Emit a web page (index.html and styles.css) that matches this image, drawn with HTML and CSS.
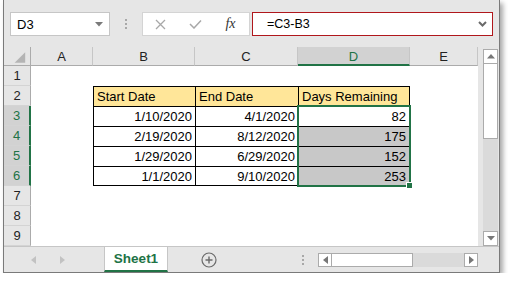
FILE: index.html
```html
<!DOCTYPE html>
<html lang="en">
<head>
    <meta charset="UTF-8">
    <title>Days Remaining</title>
    <link rel="stylesheet" href="styles.css">
</head>
<body>
    <div class="window">
      <!-- Name box + formula bar -->
      <div class="toolbar">
          <div class="namebox">
              <span>D3</span>
              <svg width="8" height="5" viewBox="0 0 8 5"><path d="M0 0h8L4 4.5z" fill="#7a7a7a"/></svg>
          </div>
          <div class="grip"></div>
          <div class="fxbtns">
              <span class="slot"><svg width="11" height="11" viewBox="0 0 11 11"><path d="M1 1l9 9M10 1l-9 9" stroke="#a8a8a8" stroke-width="1.3"/></svg></span>
              <span class="slot"><svg width="13" height="10" viewBox="0 0 13 10"><path d="M1 5l4 4L12 1.5" stroke="#a8a8a8" stroke-width="1.5" fill="none"/></svg></span>
              <span class="slot fx">fx</span>
          </div>
          <div class="formula">
              <span>=C3-B3</span>
              <svg width="9" height="6" viewBox="0 0 9 6"><path d="M1 1l3.5 3.5L8 1" stroke="#6a6a6a" stroke-width="2" fill="none"/></svg>
          </div>
      </div>

      <div class="main">
          <div class="sheet">
              <!-- header row -->
              <div class="corner"><svg width="27" height="19" viewBox="0 0 27 19"><path d="M11 16L22 5v11z" fill="#b4b4b4"/></svg></div>
              <div class="hd">A</div>
              <div class="hd">B</div>
              <div class="hd">C</div>
              <div class="hd on">D</div>
              <div class="hd">E</div>

              <div class="rh">1</div>
              <div class="c"></div><div class="c"></div><div class="c"></div><div class="c"></div><div class="c"></div>

              <div class="rh">2</div>
              <div class="c"></div>
              <div class="c t th">Start Date</div>
              <div class="c t th">End Date</div>
              <div class="c t th r">Days Remaining</div>
              <div class="c"></div>

              <div class="rh on">3</div>
              <div class="c"></div>
              <div class="c t num">1/10/2020</div>
              <div class="c t num">4/1/2020</div>
              <div class="c t num r">82</div>
              <div class="c"></div>

              <div class="rh on">4</div>
              <div class="c"></div>
              <div class="c t num">2/19/2020</div>
              <div class="c t num">8/12/2020</div>
              <div class="c t num r sel">175</div>
              <div class="c"></div>

              <div class="rh on">5</div>
              <div class="c"></div>
              <div class="c t num">1/29/2020</div>
              <div class="c t num">6/29/2020</div>
              <div class="c t num r sel">152</div>
              <div class="c"></div>

              <div class="rh on">6</div>
              <div class="c"></div>
              <div class="c t num b">1/1/2020</div>
              <div class="c t num b">9/10/2020</div>
              <div class="c t num r b sel">253</div>
              <div class="c"></div>

              <div class="rh">7</div>
              <div class="c"></div><div class="c"></div><div class="c"></div><div class="c"></div><div class="c"></div>
              <div class="rh">8</div>
              <div class="c"></div><div class="c"></div><div class="c"></div><div class="c"></div><div class="c"></div>
              <div class="rh">9</div>
              <div class="c"></div><div class="c"></div><div class="c"></div><div class="c"></div><div class="c"></div>

              <!-- selected range D3:D6 -->
              <div class="selection"></div>
          </div>

          <div class="vscroll">
              <div class="sbtn"><svg width="8" height="5" viewBox="0 0 8 5"><path d="M0 4.5L4 0l4 4.5z" fill="#777"/></svg></div>
              <div class="vtrack"><div class="vthumb"></div></div>
              <div class="sbtn"><svg width="8" height="5" viewBox="0 0 8 5"><path d="M0 0h8L4 4.5z" fill="#777"/></svg></div>
          </div>
      </div>

      <!-- Sheet tabs -->
      <div class="tabs">
          <div class="nav">
              <svg width="5" height="8" viewBox="0 0 5 8"><path d="M5 0v8L0 4z" fill="#c2c2c2"/></svg>
              <svg width="5" height="8" viewBox="0 0 5 8"><path d="M0 0v8l5-4z" fill="#c2c2c2"/></svg>
          </div>
          <div class="sheettab">Sheet1</div>
          <svg class="plus" width="16" height="16" viewBox="0 0 16 16"><circle cx="8" cy="8" r="7" fill="none" stroke="#6a6a6a" stroke-width="1.2"/><path d="M8 4.5v7M4.5 8h7" stroke="#6a6a6a" stroke-width="1.4"/></svg>
          <div class="hgrip"></div>
          <div class="hscroll">
              <div class="sbtn"><svg width="5" height="8" viewBox="0 0 5 8"><path d="M5 0v8L0 4z" fill="#777"/></svg></div>
              <div class="hthumb"></div>
              <div class="htrack"></div>
              <div class="sbtn"><svg width="5" height="8" viewBox="0 0 5 8"><path d="M0 0v8l5-4z" fill="#777"/></svg></div>
          </div>
      </div>
    </div>
</body>
</html>
```

FILE: styles.css
```css
/* General */
body {
    margin: 0;
    background: #fff;
    font-family: "Liberation Sans", Arial, sans-serif;
    font-size: 13px;
    color: #000;
}

.window {
    margin-left: 3px;
    width: 497px;
    height: 273px;
    box-sizing: border-box;
    border: 1px solid #7a7a7a;
    border-top: none;
    background: #e6e6e6;
    box-shadow: 3px 3px 5px rgba(0, 0, 0, 0.35);
    display: flex;
    flex-direction: column;
}

/* Toolbar */
.toolbar {
    flex: none;
    height: 47px;
    box-sizing: border-box;
    padding: 12px 0 0 6px;
    display: flex;
    align-items: flex-start;
}

.namebox {
    width: 100px;
    height: 24px;
    box-sizing: border-box;
    background: #fff;
    border: 1px solid #c6c6c6;
    padding: 0 6px 0 6px;
    display: flex;
    align-items: center;
    justify-content: space-between;
}

.grip {
    margin: 7px 0 0 15px;
    height: 10px;
    border-left: 2px dotted #a8a8a8;
}

.fxbtns {
    margin-left: 15px;
    width: 108px;
    height: 24px;
    box-sizing: border-box;
    background: #fff;
    border: 1px solid #d4d4d4;
    display: flex;
}

.slot {
    width: 35px;
    display: flex;
    align-items: center;
    justify-content: center;
}

.fx {
    font-family: "Liberation Serif", serif;
    font-style: italic;
    font-size: 14px;
    color: #333;
}

.formula {
    margin-left: 2px;
    width: 241px;
    height: 24px;
    box-sizing: border-box;
    background: #fff;
    border: 1px solid #b0171c;
    padding: 0 5px 0 14px;
    display: flex;
    align-items: center;
    justify-content: space-between;
    font-size: 12.5px;
}

/* Grid */
.main {
    flex: none;
    height: 199px;
    display: flex;
}

.sheet {
    position: relative;
    display: grid;
    grid-template-columns: 27px 62px 102px 103px 112px 68px;
    grid-template-rows: 19px repeat(9, 20px);
    background: #fff;
}

.corner {
    background: #e6e6e6;
    border-right: 1px solid #ababab;
    border-bottom: 1px solid #ababab;
    box-sizing: border-box;
    display: flex;
}

.hd {
    background: #e6e6e6;
    border-right: 1px solid #c6c6c6;
    border-bottom: 1px solid #ababab;
    box-sizing: border-box;
    text-align: center;
    line-height: 19px;
    color: #222;
}

.hd.on {
    background: #d2d2d2;
    color: #217346;
    border-bottom: 2px solid #217346;
}

.rh {
    background: #e6e6e6;
    border-right: 1px solid #ababab;
    border-bottom: 1px solid #d4d4d4;
    box-sizing: border-box;
    text-align: center;
    line-height: 20px;
    color: #222;
}

.rh.on {
    background: #d2d2d2;
    color: #217346;
    border-right: 2px solid #217346;
}

.c {
    padding: 0 3px;
    line-height: 20px;
    white-space: nowrap;
    overflow: hidden;
    box-sizing: border-box;
}

.t {
    border-left: 1px solid #000;
    border-top: 1px solid #000;
    line-height: 19px;
}

.t.r {
    border-right: 1px solid #000;
}

.t.b {
    border-bottom: 1px solid #000;
}

.th {
    background: #ffe699;
}

.num {
    text-align: right;
}

.sel {
    background: #c8c8c8;
}

/* overlay over D3:D6, kept out of auto placement */
.selection {
    position: absolute;
    grid-column: 5 / 6;
    grid-row: 4 / 8;
    top: -1px;
    left: -1px;
    right: -1px;
    bottom: -1px;
    border: 2px solid #217346;
    pointer-events: none;
}

.selection::after {
    content: "";
    position: absolute;
    right: -4px;
    bottom: -4px;
    width: 5px;
    height: 5px;
    background: #217346;
    border: 1px solid #fff;
}

/* Scrollbars */
.vscroll {
    width: 21px;
    box-sizing: border-box;
    padding: 2px 1px 0 5px;
    display: flex;
    flex-direction: column;
}

.sbtn {
    flex: none;
    width: 15px;
    height: 15px;
    box-sizing: border-box;
    background: #fff;
    border: 1px solid #ababab;
    display: flex;
    align-items: center;
    justify-content: center;
}

.vtrack {
    flex: 1;
    background: #dadada;
}

.vthumb {
    height: 75px;
    box-sizing: border-box;
    background: #fff;
    border: 1px solid #ababab;
    border-top: none;
}

/* Sheet tabs */
.tabs {
    flex: none;
    height: 26px;
    box-sizing: border-box;
    border-top: 1px solid #c6c6c6;
    display: flex;
    align-items: center;
}

.nav {
    width: 100px;
    box-sizing: border-box;
    padding-left: 27px;
    display: flex;
    gap: 24px;
}

.sheettab {
    align-self: stretch;
    width: 64px;
    box-sizing: border-box;
    background: #fff;
    border-left: 1px solid #c6c6c6;
    border-right: 1px solid #c6c6c6;
    border-bottom: 2px solid #217346;
    color: #217346;
    font-weight: bold;
    font-size: 13.5px;
    text-align: center;
    line-height: 23px;
}

.plus {
    margin-left: 33px;
}

.hgrip {
    margin-left: 85px;
    height: 10px;
    border-left: 2px dotted #a8a8a8;
}

.hscroll {
    margin-left: 14px;
    width: 160px;
    height: 14px;
    display: flex;
}

.hscroll .sbtn {
    width: 14px;
    height: 14px;
}

.hthumb {
    width: 81px;
    box-sizing: border-box;
    background: #fff;
    border: 1px solid #ababab;
    border-left: none;
}

.htrack {
    flex: 1;
    background: #dadada;
}
```
